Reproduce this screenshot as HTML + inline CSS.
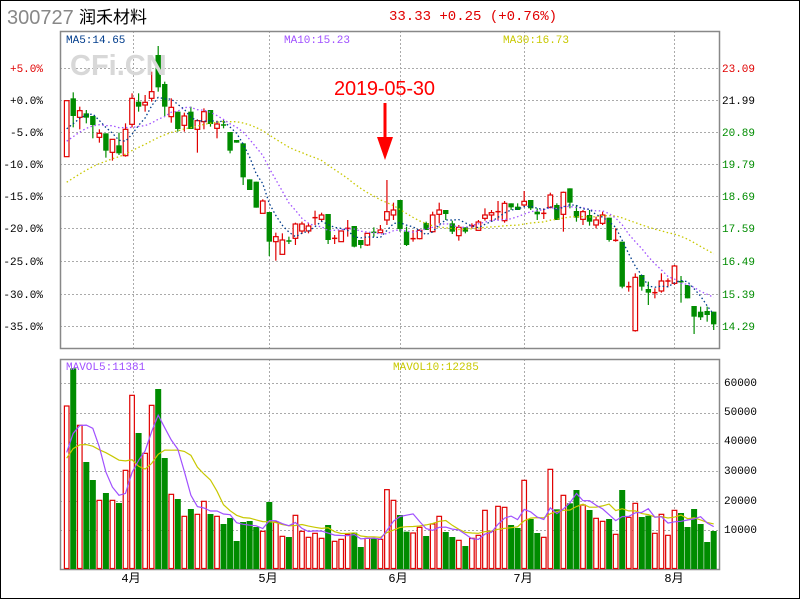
<!DOCTYPE html>
<html><head><meta charset="utf-8"><style>
html,body{margin:0;padding:0;background:#fff;width:800px;height:600px;overflow:hidden}
svg{display:block}
text{font-family:"Liberation Mono",monospace;font-size:11px}
</style></head><body>
<svg id="s" width="800" height="600" xmlns="http://www.w3.org/2000/svg">
<rect x="0.5" y="0.5" width="799" height="598" fill="#fff" stroke="#000"/>
<text x="7" y="24" style="font-family:'Liberation Sans',sans-serif;font-size:20px" fill="#888">300727</text>
<text x="79" y="23" style="font-family:'Liberation Sans','Noto Sans CJK SC',sans-serif;font-size:17px" fill="#000">润禾材料</text>
<text x="389" y="20" style="font-size:14px" fill="#e00000">33.33 +0.25 (+0.76%)</text>
<g id="g"></g>
<text x="70" y="75" style="font-family:'Liberation Sans',sans-serif;font-weight:bold;font-size:29px" fill="#d8d8d8">CFi.CN</text>
<text x="66" y="43" fill="#003c8c">MA5:14.65</text>
<text x="284" y="43" fill="#a050ff">MA10:15.23</text>
<text x="503" y="43" fill="#c8c800">MA30:16.73</text>
<text x="334" y="95" textLength="101" style="font-family:'Liberation Sans',sans-serif;font-size:20px" fill="#ff0000">2019-05-30</text>
<line x1="385" y1="103" x2="385" y2="150" stroke="#f00" stroke-width="3"/>
<polygon points="377,137 393,137 385,160" fill="#f00"/>
<text x="66" y="370" fill="#a050ff">MAVOL5:11381</text>
<text x="393" y="370" fill="#c8c800">MAVOL10:12285</text>
</svg>
<script>
var g=document.getElementById('g'),h='';
function L(x1,y1,x2,y2,c,d,w){h+='<line x1="'+x1+'" y1="'+y1+'" x2="'+x2+'" y2="'+y2+'" stroke="'+c+'"'+(d?' stroke-dasharray="'+d+'"':'')+(w?' stroke-width="'+w+'"':'')+'/>';}
function T(x,y,t,c,a){h+='<text x="'+x+'" y="'+y+'" fill="'+c+'"'+(a?' text-anchor="end"':'')+'>'+t+'</text>';}
var hy=[68,100,132,164,196,228,261,294,326],vx=[133,269,400,524,674];
hy.forEach(function(y){L(60,y+.5,720,y+.5,'#aaa','2,2');});
vx.forEach(function(x){L(x+.5,31,x+.5,348,'#aaa','2,2');L(x+.5,359,x+.5,569,'#aaa','2,2');});
[383,413,443,471,501,530].forEach(function(y){L(60,y+.5,720,y+.5,'#aaa','2,2');});
h+='<rect x="60.5" y="31.5" width="659" height="317" fill="none" stroke="#888" stroke-width="1.5"/>';
h+='<rect x="60.5" y="359.5" width="659" height="210" fill="none" stroke="#888" stroke-width="1.5"/>';
var lp=['+5.0%','+0.0%','-5.0%','-10.0%','-15.0%','-20.0%','-25.0%','-30.0%','-35.0%'];
var rp=['23.09','21.99','20.89','19.79','18.69','17.59','16.49','15.39','14.29'];
hy.forEach(function(y,i){T(43,y+4,lp[i],i==0?'#e00000':'#000',1);T(722,y+4,rp[i],i==0?'#e00000':(i==1?'#000':'#008c00'));});
['60000','50000','40000','30000','20000','10000'].forEach(function(t,i){T(724,[382,411,440,470,500,529][i]+4,t,'#000');});
[['4月',131],['5月',268],['6月',398],['7月',523],['8月',674]].forEach(function(m){h+='<text x="'+m[1]+'" y="582" text-anchor="middle" style="font-family:\'Liberation Mono\',\'Noto Sans CJK SC\',monospace;font-size:12px" fill="#000">'+m[0]+'</text>';});
var A=[['r',182,350,182,350],['g',175,228,157,262],['r',212,232,200,268],['g',220,233,210,250],['g',228,255,228,295],['r',280,292,268,308],['g',280,332,280,353],['r',298,337,298,362],['g',316,340,278,345],['r',268,347,250,350],['r',175,253,160,262],['g',185,200,160,215],['r',187,195,165,215],['r',155,175,95,185],['g',45,142,18,155],['g',132,200,125,228],['r',202,230,175,248],['g',215,267,215,275],['r',228,256,218,275],['g',215,267,200,267],['r',242,268,238,338],['r',215,245,205,268],['g',210,252,210,260],['r',252,265,242,295],['g',255,256,240,265],['g',276,332,276,340],['g',300,308,300,308],['g',310,412,310,435],['g',418,450,418,450],['g',425,503,425,503],['r',483,520,478,520],['g',516,605,516,648],['r',590,605,578,662],['r',600,643,580,643],['g',603,604,590,612],['r',552,595,548,615],['r',552,573,545,582],['r',558,573,550,580],['r',533,534,512,555],['r',525,538,518,545],['g',522,600,522,612],['r',595,596,585,612],['r',573,605,573,605],['r',565,566,540,590],['g',558,620,558,622],['g',600,615,600,625],['r',580,615,580,618],['g',577,578,562,590],['r',570,578,555,578],['r',515,540,420,555],['r',510,525,488,540]];
var C=[];
A.forEach(function(a){C.push([a[0],40+a[1]/3,40+a[2]/3,40+a[3]/3,40+a[4]/3]);});
var B=[['g',120,207,120,215],['g',215,255,200,258],['r',236,237,210,245],['r',211,236,208,238],['g',189,210,185,210],['r',165,215,155,218],['r',150,163,128,190],['g',150,162,150,180],['g',190,215,182,222],['r',202,227,195,242],['g',202,215,202,220],['r',197,198,190,205],['r',186,211,180,211],['r',165,175,145,182],['r',158,165,150,185],['r',155,156,123,180],['r',130,182,123,188],['g',130,142,130,150],['g',140,150,130,150],['r',124,135,93,140],['g',120,145,120,150],['g',155,163,145,180],['r',160,161,145,177],['r',105,142,98,145],['g',135,180,130,180],['r',97,163,95,215],['g',85,128,85,145],['g',153,173,135,185],['r',155,178,150,195],['g',165,185,150,197],['r',180,195,170,205],['r',165,190,155,195],['g',173,240,173,245],['r',241,242,205,245],['g',245,380,245,385],['r',380,381,365,395],['r',352,512,340,515],['g',345,380,345,392],['g',387,398,365,435],['r',398,399,385,415],['r',363,393,340,398],['r',363,364,355,380],['r',318,370,315,375],['g',365,366,348,428],['g',375,415,375,415],['g',438,470,438,522],['g',455,472,440,480],['g',453,465,440,485],['g',455,493,455,510]];
B.forEach(function(a){C.push([a[0],160+a[1]/3,160+a[2]/3,160+a[3]/3,160+a[4]/3]);});
var N=C.length,X=function(i){return 66.7+i*(647/(N-1));};
var RED='#e00000',GRN='#008c00';
C.forEach(function(c,i){var x=X(i),col=c[0]=='r'?RED:GRN;
 L(x,c[3],x,c[4],col,0,1.2);
 var t=c[1],b=c[2]; if(b-t<1.5){L(x-2.6,t,x+2.6,t,col,0,1.5);return;}
 if(c[0]=='r')h+='<rect x="'+(x-2.3)+'" y="'+t+'" width="4.6" height="'+(b-t)+'" fill="#fff" stroke="'+RED+'" stroke-width="1.2"/>';
 else h+='<rect x="'+(x-2.7)+'" y="'+t+'" width="5.4" height="'+(b-t)+'" fill="'+GRN+'"/>';
});
var cl=C.map(function(c){return c[0]=='r'?c[1]:c[2];});
var pad=[];for(var k=0;k<29;k++)pad.push(240-110*k/28);
var all=pad.concat(cl);
function ma(arr,n,off){var r=[];for(var i=off;i<arr.length;i++){var s=0,m=0;for(var j=Math.max(0,i-n+1);j<=i;j++){s+=arr[j];m++;}r.push(s/m);}return r;}
function poly(v,col,d,w){var p=v.map(function(y,i){return X(i).toFixed(1)+','+y.toFixed(1);}).join(' ');h+='<polyline points="'+p+'" fill="none" stroke="'+col+'"'+(d?' stroke-dasharray="'+d+'"':'')+' stroke-width="'+(w||1)+'"/>';}
poly(ma(all,30,29),'#c8c800','1.5,2.5',1.3);
poly(ma(all,10,29),'#a050ff','1.5,2.5',1.3);
poly(ma(all,5,29),'#003c8c','1.5,2.5',1.3);
var V1=[228,115,286,396,450,511,489,511,519,421,196,309,370,226,177,384,493,507,559,537,553,514,552,559,582,564,633,576,573,591,604,516,576,619,621,556,604,622,610,625,585,634,628,613,608,651,625,625,628,479,511].map(function(y){return 330+y/3;});
var V2=[495,545,549,532,558,522,499,546,561,571,588,565,556,481,544,469,472,525,534,391,507,549,562,358,478,436,460,420,465,480,505,514,507,553,420,502,460,501,497,550,493,556,481,489,531,477,522,576,543].map(function(y){return 350+y/3;});
var V=V1.concat(V2);
V.forEach(function(y,i){var x=X(i),c=C[i][0];
 if(c=='r')h+='<rect x="'+(x-2.3)+'" y="'+y+'" width="4.6" height="'+(568.5-y)+'" fill="#fff" stroke="'+RED+'" stroke-width="1.2"/>';
 else h+='<rect x="'+(x-3)+'" y="'+y+'" width="6" height="'+(569-y)+'" fill="'+GRN+'"/>';
});
var vh=V.map(function(y){return 569-y;});var vp=[];for(var k=0;k<9;k++)vp.push(105);
var va=vp.concat(vh);
poly(ma(va,10,9).map(function(v){return 569-v;}),'#c8c800',0,1.2);
poly(ma(va,5,9).map(function(v){return 569-v;}),'#a050ff',0,1.2);
g.innerHTML=h;
</script>
</body></html>
